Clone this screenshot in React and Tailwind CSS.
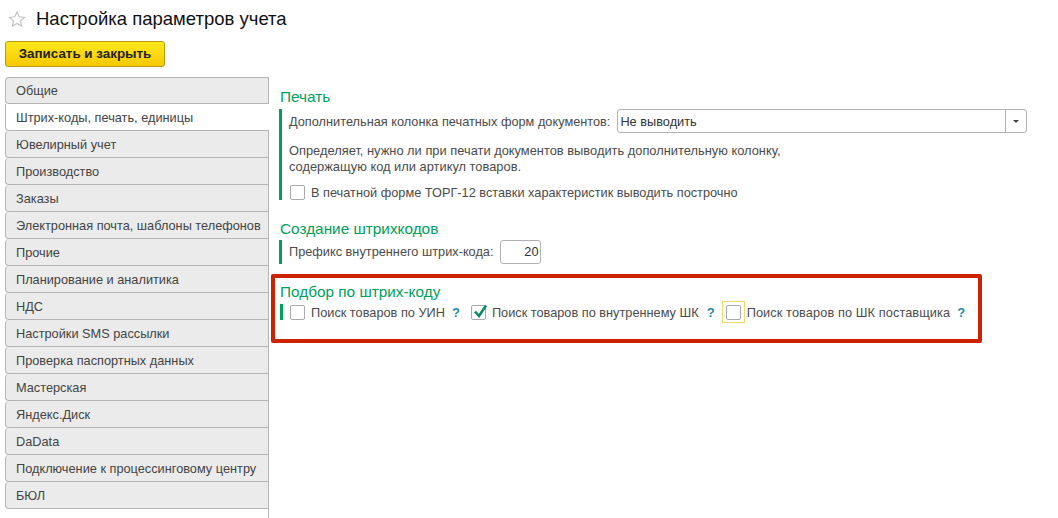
const tabs = [
  "Общие",
  "Штрих-коды, печать, единицы",
  "Ювелирный учет",
  "Производство",
  "Заказы",
  "Электронная почта, шаблоны телефонов",
  "Прочие",
  "Планирование и аналитика",
  "НДС",
  "Настройки SMS рассылки",
  "Проверка паспортных данных",
  "Мастерская",
  "Яндекс.Диск",
  "DaData",
  "Подключение к процессинговому центру",
  "БЮЛ",
]

function Checkbox({ checked }) {
  return (
    <span className="relative block w-[15px] h-[15px] shrink-0 rounded-[2px] border border-[#a9a9a9] bg-white">
      {checked && (
        <svg className="absolute left-[1px] top-[-3px]" width="15" height="16" viewBox="0 0 15 16">
          <path d="M2 8.5 L6 13 L13 2.5" fill="none" stroke="#0b8a5f" strokeWidth="2.6" />
        </svg>
      )}
    </span>
  )
}

function Help() {
  return <span className="block w-[8px] text-[13px] font-bold text-[#1f8aa8]">?</span>
}

function SectionTitle({ children }) {
  return <h2 className="text-[15.35px] leading-[18px] text-[#00a05a]">{children}</h2>
}

export default function App() {
  return (
    <div className="w-[1058px] h-[518px] overflow-hidden bg-white text-[12.75px] text-[#4b4b4b]" style={{ fontFamily: '"Liberation Sans", Arial, sans-serif' }}>
      {/* Header */}
      <div className="flex items-center h-[37px] pl-[8px]">
        <svg width="18" height="18" viewBox="0 0 24 24" fill="#fff" stroke="#c4c4c4" strokeWidth="1.6">
          <path d="M12 2.5 L14.9 9 L22 9.8 L16.7 14.5 L18.2 21.5 L12 17.9 L5.8 21.5 L7.3 14.5 L2 9.8 L9.1 9 Z" />
        </svg>
        <h1 className="ml-[10px] text-[18.5px] leading-[22px] text-[#111]">Настройка параметров учета</h1>
      </div>

      <div className="pl-[5px] pt-[4px]">
        <button className="block w-[160px] h-[26px] rounded-[3px] border border-[#b89b10] bg-gradient-to-b from-[#ffe81a] to-[#f7c800] text-[13.4px] font-bold text-[#222]">
          Записать и закрыть
        </button>
      </div>

      <div className="flex pl-[5px] pt-[10px]">
        {/* Tabs */}
        <div className="w-[264px] shrink-0 border-r border-[#b5b5b5] h-[441px]">
          {tabs.map((t, i) => (
            <div
              key={t}
              className={
                i === 1
                  ? "flex items-center h-[27px] pl-[10px] pt-[1px] -mr-[1px] bg-white border-l border-b border-[#b5b5b5] rounded-bl-[4px] whitespace-nowrap text-[#444]"
                  : "flex items-center h-[27px] pl-[10px] pt-[1px] bg-[#ebebeb] border-l border-b border-[#b5b5b5] rounded-l-[4px] whitespace-nowrap first:border-t text-[#444]"
              }
            >
              {t}
            </div>
          ))}
        </div>

        {/* Content */}
        <div className="flex-1 pl-[2px]">
          <div className="pl-[8px] pt-[11px]">
            <div className="pl-[1px]">
              <SectionTitle>Печать</SectionTitle>
            </div>
            <div className="mt-[3px] border-l-[3px] border-[#00a05a] pl-[7px] h-[91px]">
              <div className="flex items-center h-[24px]">
                <span className="whitespace-nowrap pt-[1px]">Дополнительная колонка печатных форм документов:</span>
                <div className="flex ml-[7px] w-[410px] h-[24px] rounded-[3px] border border-[#b0b0b0] text-[#333]">
                  <span className="flex-1 flex items-center pl-[2px] pt-[1px]">Не выводить</span>
                  <span className="flex items-center justify-center w-[21px] border-l border-[#b0b0b0]">
                    <span className="block w-0 h-0 border-x-[3px] border-t-[3px] border-x-transparent border-t-[#444]" />
                  </span>
                </div>
              </div>
              <p className="mt-[10px] text-[12.87px] leading-[16px]">
                Определяет, нужно ли при печати документов выводить дополнительную колонку,
                <br />
                содержащую код или артикул товаров.
              </p>
              <label className="flex items-center gap-[6px] mt-[10px] ml-[1px] h-[15px]">
                <Checkbox />
                <span>В печатной форме ТОРГ-12 вставки характеристик выводить построчно</span>
              </label>
            </div>
          </div>

          <div className="pl-[8px] mt-[20px]">
            <div className="pl-[1px]">
              <SectionTitle>Создание штрихкодов</SectionTitle>
            </div>
            <div className="flex items-center mt-[2px] h-[24px] border-l-[3px] border-[#00a05a] pl-[7px]">
              <span>Префикс внутреннего штрих-кода:</span>
              <span className="flex items-center justify-end ml-[6px] w-[41px] h-[24px] pr-[1px] rounded-[3px] border border-[#b0b0b0] text-[#333]">20</span>
            </div>
          </div>

          {/* Highlighted section */}
          <div className="mt-[10px] w-[711px] h-[69px] rounded-[2px] border-4 border-[#cc2200] pl-[5px] pt-[5px]">
            <SectionTitle>Подбор по штрих-коду</SectionTitle>
            <div className="flex items-center mt-[3px] h-[16px] border-l-[3px] border-[#00a05a] pl-[7px] whitespace-nowrap">
              <Checkbox />
              <span className="ml-[6px] pt-[1px]">Поиск товаров по УИН</span>
              <span className="ml-[7px] pt-[1px]"><Help /></span>
              <span className="ml-[11px]"><Checkbox checked /></span>
              <span className="ml-[6px] pt-[1px]">Поиск товаров по внутреннему ШК</span>
              <span className="ml-[8px] pt-[1px]"><Help /></span>
              <span className="ml-[7px] flex items-center justify-center shrink-0 w-[23px] h-[22px] border border-[#f0dc6e]"><Checkbox /></span>
              <span className="ml-[2px] pt-[1px] tracking-[0.1px]">Поиск товаров по ШК поставщика</span>
              <span className="ml-[7px] pt-[1px]"><Help /></span>
            </div>
          </div>
        </div>
      </div>
    </div>
  )
}
